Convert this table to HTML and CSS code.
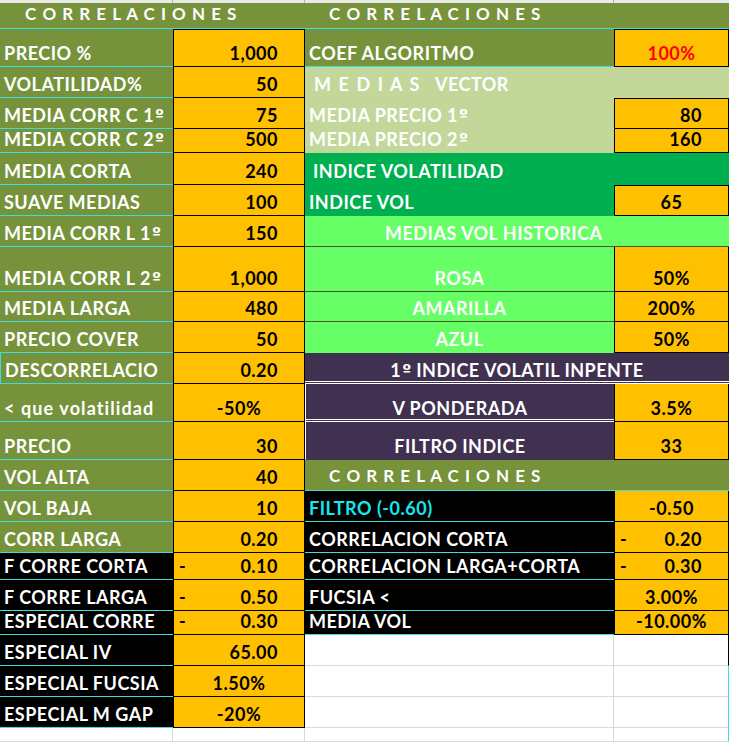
FILE: index.html
```html
<!DOCTYPE html>
<html lang="es">
<head>
<meta charset="utf-8">
<title>Correlaciones</title>
<link rel="stylesheet" href="styles.css">
</head>
<body>
<div class="sheet">
  <!-- header strip -->
  <div class="hd"></div><div class="hd"></div><div class="hd"></div><div class="hd last"></div>

  <!-- r1 -->
  <div class="c olive title s2 cyb"><span class="ttl ttl-a">C O R R E L A C I O N E S</span></div>
  <div class="c olive title s2 cyb"><span class="ttl ttl-c">C O R R E L A C I O N E S</span></div>

  <!-- r2 -->
  <div class="c olive cyb">PRECIO %</div>
  <div class="c y bt num">1,000</div>
  <div class="c olive cyb">COEF ALGORITMO</div>
  <div class="c y bt ctr red">100%</div>

  <!-- r3 -->
  <div class="c olive cyb">VOLATILIDAD%</div>
  <div class="c y num">50</div>
  <div class="c lg s2 pad-medias"><span class="spaced">M E D I A S</span>&nbsp;&nbsp;&nbsp;VECTOR</div>

  <!-- r4 -->
  <div class="c olive cyb">MEDIA CORR C 1<span class="ord">º</span></div>
  <div class="c y num">75</div>
  <div class="c lg">MEDIA PRECIO 1<span class="ord">º</span></div>
  <div class="c y bt num">80</div>

  <!-- r5 -->
  <div class="c olive cyb">MEDIA CORR C 2<span class="ord">º</span></div>
  <div class="c y num">500</div>
  <div class="c lg">MEDIA PRECIO 2<span class="ord">º</span></div>
  <div class="c y num">160</div>

  <!-- r6 -->
  <div class="c olive cyb">MEDIA CORTA</div>
  <div class="c y num">240</div>
  <div class="c g s2 pad-indice">INDICE VOLATILIDAD</div>

  <!-- r7 -->
  <div class="c olive cyb">SUAVE MEDIAS</div>
  <div class="c y num">100</div>
  <div class="c g">INDICE VOL</div>
  <div class="c y bt ctr">65</div>

  <!-- r8 -->
  <div class="c olive cyb">MEDIA CORR L 1<span class="ord">º</span></div>
  <div class="c y num">150</div>
  <div class="c bg s2 dkb pad-hist">MEDIAS VOL HISTORICA</div>

  <!-- r9 -->
  <div class="c olive cyb">MEDIA CORR L 2<span class="ord">º</span></div>
  <div class="c y num">1,000</div>
  <div class="c bg dkb ctr">ROSA</div>
  <div class="c y ctr">50%</div>

  <!-- r10 -->
  <div class="c olive cyb">MEDIA LARGA</div>
  <div class="c y num">480</div>
  <div class="c bg dkb ctr">AMARILLA</div>
  <div class="c y ctr">200%</div>

  <!-- r11 -->
  <div class="c olive cyb">PRECIO COVER</div>
  <div class="c y num">50</div>
  <div class="c bg ctr">AZUL</div>
  <div class="c y ctr">50%</div>

  <!-- r12 -->
  <div class="c olive cyb cyl">DESCORRELACIO</div>
  <div class="c y num">0.20</div>
  <div class="c pu s2 ctr dbl">1<span class="ord">º</span>&nbsp;INDICE VOLATIL INPENTE</div>

  <!-- r13 -->
  <div class="c olive cyb lower">&lt; que volatilidad</div>
  <div class="c y ctr">-50%</div>
  <div class="c pu ctr dbl wl">V PONDERADA</div>
  <div class="c y ctr">3.5%</div>

  <!-- r14 -->
  <div class="c olive cyb">PRECIO</div>
  <div class="c y num">30</div>
  <div class="c pu ctr wl">FILTRO INDICE</div>
  <div class="c y ctr">33</div>

  <!-- r15 -->
  <div class="c olive cyb">VOL ALTA</div>
  <div class="c y num">40</div>
  <div class="c olive title s2 cyb"><span class="ttl ttl-c">C O R R E L A C I O N E S</span></div>

  <!-- r16 -->
  <div class="c olive cyb">VOL BAJA</div>
  <div class="c y num">10</div>
  <div class="c bk cyb cyantext">FILTRO (-0.60)</div>
  <div class="c y ctr">-0.50</div>

  <!-- r17 -->
  <div class="c olive cyb">CORR LARGA</div>
  <div class="c y num">0.20</div>
  <div class="c bk cyb">CORRELACION CORTA</div>
  <div class="c y acc"><span>-</span><span>0.20</span></div>

  <!-- r18 -->
  <div class="c bk cyb">F CORRE CORTA</div>
  <div class="c y acc"><span>-</span><span>0.10</span></div>
  <div class="c bk cyb">CORRELACION LARGA+CORTA</div>
  <div class="c y acc"><span>-</span><span>0.30</span></div>

  <!-- r19 -->
  <div class="c bk cyb">F CORRE LARGA</div>
  <div class="c y acc"><span>-</span><span>0.50</span></div>
  <div class="c bk cyb">FUCSIA &lt;</div>
  <div class="c y ctr">3.00%</div>

  <!-- r20 -->
  <div class="c bk cyb">ESPECIAL CORRE</div>
  <div class="c y acc"><span>-</span><span>0.30</span></div>
  <div class="c bk cyb">MEDIA VOL</div>
  <div class="c y ctr">-10.00%</div>

  <!-- r21 -->
  <div class="c bk cyb">ESPECIAL IV</div>
  <div class="c y num">65.00</div>
  <div class="c w"></div>
  <div class="c w rb"></div>

  <!-- r22 -->
  <div class="c bk cyb">ESPECIAL FUCSIA</div>
  <div class="c y ctr">1.50%</div>
  <div class="c w"></div>
  <div class="c w rc"></div>

  <!-- r23 -->
  <div class="c bk cyb">ESPECIAL M GAP</div>
  <div class="c y ctr">-20%</div>
  <div class="c w"></div>
  <div class="c w rc"></div>

  <!-- r24 -->
  <div class="c w"></div>
  <div class="c w"></div>
  <div class="c w"></div>
  <div class="c w rc"></div>
</div>
</body>
</html>
```

FILE: styles.css
```css
html, body {
  margin: 0;
  padding: 0;
  background: #ffffff;
}

.sheet {
  display: grid;
  grid-template-columns: 173px 132px 309px 115px;
  grid-template-rows: 3px 26px 38px 31px 31px 24px 32px 31px 31px 45px 30px 31px 31px 38px 38px 31px 31px 31px 27px 31px 24px 31px 31px 31px 14px;
  width: 729px;
  height: 742px;
  overflow: hidden;
  font-family: Lato, "Open Sans", sans-serif;
  font-weight: 700;
  font-size: 18px;
  letter-spacing: 0.5px;
}

.hd {
  background: #e9e9e9;
  border-right: 1px solid #b5b5b5;
}
.hd.last { border-right: none; }

.c {
  box-sizing: border-box;
  display: flex;
  align-items: flex-end;
  padding: 0 4px 3px 4px;
  line-height: 20px;
  white-space: nowrap;
  color: #ffffff;
  border-bottom: 1px solid transparent;
  min-width: 0;
}

.s2 { grid-column: span 2; }

/* backgrounds */
.olive { background: #76933c; border-bottom-color: #76933c; }
.y {
  background: #ffc000;
  color: #000000;
  border-left: 1px solid #000;
  border-right: 1px solid #000;
  border-bottom: 1px solid #000;
}
.lg { background: #c4d79b; border-bottom-color: #c4d79b; }
.g { background: #00b050; border-bottom-color: #00b050; }
.bg { background: #66ff66; border-bottom-color: #66ff66; }
.pu { background: #403151; border-bottom-color: #403151; }
.bk { background: #000000; border-bottom-color: #000; }
.w { background: #ffffff; border-bottom-color: #d9d9d9; border-right: 1px solid #d9d9d9; }

/* borders */
.cyb { border-bottom-color: #3fdcdc; }
.cyl { border-left: 1px solid #3fdcdc; }
.bt { border-top: 1px solid #000; }
.dkb { border-bottom-color: #4a5530; }
.dbl { border-bottom: 3px double #ffffff; padding-bottom: 1px; }
.wl { border-left: 1px solid #ffffff; }
.rb { border-right: 1px solid #000; }
.rc { border-right: 1px solid #3fdcdc; }

/* alignments */
.num { justify-content: flex-end; padding-right: 26px; }
.ctr { justify-content: center; }
.acc { justify-content: space-between; padding-left: 5px; padding-right: 26px; }
.red { color: #ff0000; }
.cyantext { color: #12e8ee; }
.lower { letter-spacing: 1.1px; }

.ord { font-family: "DejaVu Sans", sans-serif; font-size: 16px; letter-spacing: 0; margin-left: 1px; }

/* titles */
.title { padding-bottom: 4px; }
.ttl { font-size: 17px; letter-spacing: 1px; }
.ttl-a { padding-left: 21px; }
.ttl-c { padding-left: 20px; }

.pad-medias { padding-left: 9px; }
.spaced { letter-spacing: 1.6px; }
.pad-indice { padding-left: 8px; }
.pad-hist { padding-left: 80px; }
```
